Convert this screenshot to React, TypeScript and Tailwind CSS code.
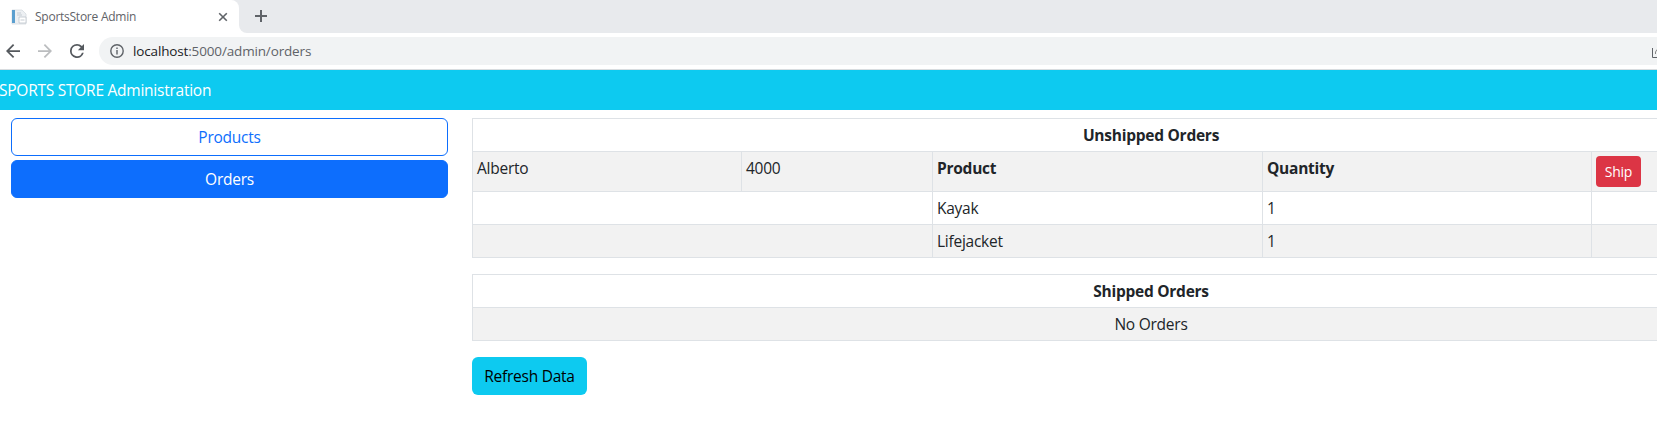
import React from "react";

const NAV = "flex h-[38px] items-center justify-center rounded-md border border-[#0d6efd] pt-px";
const CELL = "border border-[#dee2e6] px-1 pt-1 pb-0 align-top leading-6";

export default function App() {
  return (
    <div className="h-[431px] w-[1657px] overflow-hidden bg-white font-['Open_Sans','Noto_Sans',sans-serif] text-[15.5px] tracking-[-0.25px] text-[#212529]">
      <div className="flex h-[33px] bg-[#e8eaed]">
        <div className="flex h-[33px] w-[239px] items-center rounded-tr-lg bg-white pl-[11px]">
          <svg width="17" height="16" viewBox="0 0 17 16" className="shrink-0">
            <path d="M1 1h10l4 4v10H1z" fill="#edf0f3" stroke="#d5dae0" strokeWidth=".8" />
            <path d="M1 1h3v13H1z" fill="#5b9fcf" />
            <path d="M8 8h7v6H8z" fill="#fff" stroke="#bcc4cc" strokeWidth=".8" />
            <path d="M6 4h4M6 6h5M9.500 11h4" stroke="#c5ccd3" />
          </svg>
          <span className="ml-[7px] text-[12px] whitespace-nowrap text-[#5f6368]">SportsStore Admin</span>
          <svg width="10" height="10" viewBox="0 0 10 10" className="mr-[11px] ml-auto" fill="none" stroke="#5f6368" strokeWidth="1.6">
            <path d="M1.200 1.200l7.600 7.600M8.800 1.200l-7.600 7.600" />
          </svg>
        </div>
        <div className="w-2 bg-white"><div className="h-full rounded-bl-lg bg-[#e8eaed]" /></div>
        <svg width="12" height="12" viewBox="0 0 12 12" className="mt-[10px] ml-2" stroke="#5f6368" strokeWidth="2">
          <path d="M6 0v12M0 6h12" />
        </svg>
      </div>
      <div className="flex h-[37px] items-start border-b border-[#d8dcdf] pt-1">
        <div className="flex h-7 w-[99px] items-center pl-[6px]">
          <svg width="14" height="14" viewBox="4 4 16 16" fill="#55595e"><path d="M20 11H7.830l5.590-5.590L12 4l-8 8 8 8 1.410-1.410L7.830 13H20v-2z" /></svg>
          <svg width="14" height="14" viewBox="4 4 16 16" fill="#bbbdbf" className="ml-[18px]"><path d="M12 4l-1.410 1.410L16.170 11H4v2h12.170l-5.580 5.590L12 20l8-8z" /></svg>
          <svg width="14" height="14" viewBox="4 4 16 16" fill="#55595e" className="ml-[18px]"><path d="M17.650 6.350A7.958 7.958 0 0 0 12 4a8 8 0 1 0 7.730 10h-2.080A6 6 0 1 1 12 6c1.660 0 3.140.69 4.220 1.780L13 11h7V4z" /></svg>
        </div>
        <div className="flex h-7 flex-1 items-center rounded-l-full bg-[#f1f3f4] pl-[11px]">
          <svg width="14" height="14" viewBox="0 0 14 14" fill="none" stroke="#5f6368" strokeWidth="1.400"><circle cx="7" cy="7" r="6.200" /><path d="M7 6v4.500M7 3.500v1.400" /></svg>
          <span className="ml-[9px] text-[13.5px] tracking-[-0.15px] text-[#5f6368]"><span className="text-[#202124]">localhost</span>:5000/admin/orders</span>
          <svg width="5" height="10" viewBox="0 0 5 10" className="mt-[3px] ml-auto" fill="none" stroke="#5f6368"><path d="M.5 0v9.500H5" /><path d="M5 1.500L3.500 4v2" stroke="#888" /></svg>
        </div>
      </div>
      <div className="flex h-10 items-center bg-[#0dcaf0] pt-px text-white"><span className="-ml-px">SPORTS STORE Administration</span></div>
      <div className="flex pt-2">
        <div className="ml-[11px] flex w-[437px] shrink-0 flex-col gap-1">
          <div className={`${NAV} text-[#0d6efd]`}>Products</div>
          <div className={`${NAV} bg-[#0d6efd] text-white`}>Orders</div>
        </div>
        <div className="ml-6 w-[1358px] shrink-0">
          <table className="w-[1358px] table-fixed border-collapse">
            <colgroup>
              <col className="w-[269px]" /><col className="w-[191px]" /><col className="w-[330px]" /><col className="w-[329px]" /><col />
            </colgroup>
            <tbody>
              <tr className="h-[33px]"><th colSpan={5} className={CELL}>Unshipped Orders</th></tr>
              <tr className="h-10 bg-[#f2f2f2] text-left">
                <td className={CELL}>Alberto</td>
                <td className={CELL}>4000</td>
                <th className={CELL}>Product</th>
                <th className={CELL}>Quantity</th>
                <td className={CELL}><div className="flex h-[31px] w-[45px] items-center justify-center rounded bg-[#dc3545] text-[14px] text-white">Ship</div></td>
              </tr>
              <tr className="h-[33px]"><td colSpan={2} className={CELL} /><td className={CELL}>Kayak</td><td className={CELL}>1</td><td className={CELL} /></tr>
              <tr className="h-[33px] bg-[#f2f2f2]"><td colSpan={2} className={CELL} /><td className={CELL}>Lifejacket</td><td className={CELL}>1</td><td className={CELL} /></tr>
            </tbody>
          </table>
          <table className="mt-4 w-[1358px] table-fixed border-collapse text-center">
            <tbody>
              <tr className="h-[33px]"><th className={CELL}>Shipped Orders</th></tr>
              <tr className="h-[33px] bg-[#f2f2f2]"><td className={CELL}>No Orders</td></tr>
            </tbody>
          </table>
          <div className="mt-4 flex h-[38px] w-[115px] items-center justify-center rounded-md bg-[#0dcaf0] pt-px text-black">Refresh Data</div>
        </div>
      </div>
    </div>
  );
}
